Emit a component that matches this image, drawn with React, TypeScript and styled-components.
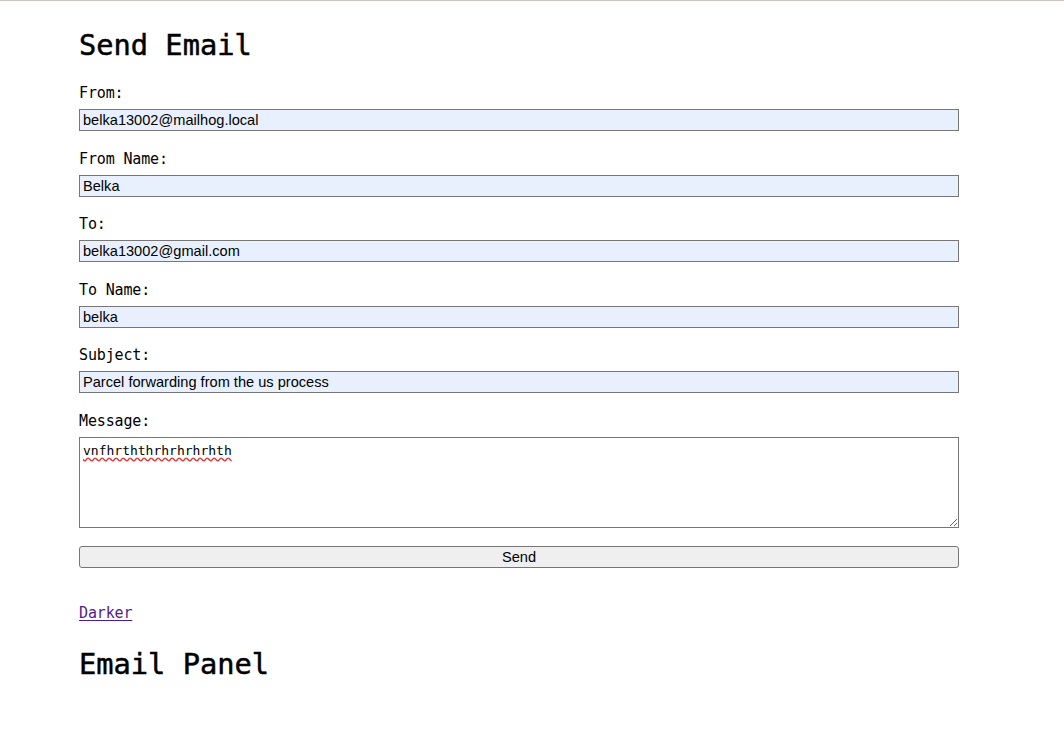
import React from "react";
import styled, { createGlobalStyle } from "styled-components";

const Global = createGlobalStyle`
  html, body { margin: 0; padding: 0; background: #ffffff; }
  body { border-top: 1px solid #cbc5bf; font-family: "DejaVu Sans Mono", monospace; color: #000; }
`;

const Page = styled.main`
  padding: 0 0 40px 79px;
  width: 880px;
`;

const Heading = styled.h1<{ $top: number }>`
  font-family: "DejaVu Sans Mono", monospace;
  font-size: 28.7px;
  font-weight: normal;
  line-height: 34px;
  margin: ${(p) => p.$top}px 0 0 0;
  letter-spacing: 0;
  -webkit-text-stroke: 0.5px #000;
`;

const Form = styled.form`
  display: flex;
  flex-direction: column;
  margin-top: 21px;
`;

const Field = styled.div`
  display: flex;
  flex-direction: column;
  margin-bottom: 17.6px;
`;

const Label = styled.label`
  font-family: "DejaVu Sans Mono", monospace;
  font-size: 15px;
  line-height: 20px;
  margin-bottom: 6px;
  letter-spacing: -0.15px;
`;

const Input = styled.input`
  box-sizing: border-box;
  width: 880px;
  height: 22px;
  margin: 0;
  padding: 1px 3px;
  border: 1px solid #767676;
  border-radius: 0;
  background: #e8f0fe;
  font-family: "Liberation Sans", Arial, sans-serif;
  font-size: 14.6px;
  color: #000;
  outline: none;
`;

const TextArea = styled.textarea`
  box-sizing: border-box;
  width: 880px;
  height: 91px;
  margin: 0;
  padding: 4px 3px 2px 3px;
  border: 1px solid #767676;
  border-radius: 0;
  background: #fff;
  font-family: "DejaVu Sans Mono", monospace;
  font-size: 13px;
  line-height: 17px;
  color: #000;
  text-decoration: underline wavy #e03030;
  text-underline-offset: 2px;
  outline: none;
`;

const SendButton = styled.button`
  box-sizing: border-box;
  width: 880px;
  height: 22px;
  margin: 0.4px 0 0 0;
  padding: 0;
  border: 1px solid #767676;
  border-radius: 3px;
  background: #efefef;
  font-family: "Liberation Sans", Arial, sans-serif;
  font-size: 14.6px;
  color: #000;
`;

const ThemeLink = styled.a`
  display: inline-block;
  margin-top: 35px;
  font-family: "DejaVu Sans Mono", monospace;
  font-size: 15px;
  line-height: 20px;
  color: #551a8b;
  text-decoration: underline;
  text-underline-offset: 2px;
  letter-spacing: -0.15px;
`;

const fields = [
  { label: "From:", value: "belka13002@mailhog.local" },
  { label: "From Name:", value: "Belka" },
  { label: "To:", value: "belka13002@gmail.com" },
  { label: "To Name:", value: "belka" },
  { label: "Subject:", value: "Parcel forwarding from the us process" },
];

export default function App() {
  return (
    <>
      <Global />
      <Page>
        <Heading $top={27}>Send Email</Heading>
        <Form onSubmit={(e) => e.preventDefault()}>
          {fields.map((f) => (
            <Field key={f.label}>
              <Label>{f.label}</Label>
              <Input defaultValue={f.value} />
            </Field>
          ))}
          <Field>
            <Label>Message:</Label>
            <TextArea defaultValue="vnfhrththrhrhrhrhth" spellCheck={false} />
          </Field>
          <SendButton type="submit">Send</SendButton>
        </Form>
        <ThemeLink href="#">Darker</ThemeLink>
        <Heading $top={24}>Email Panel</Heading>
      </Page>
    </>
  );
}
